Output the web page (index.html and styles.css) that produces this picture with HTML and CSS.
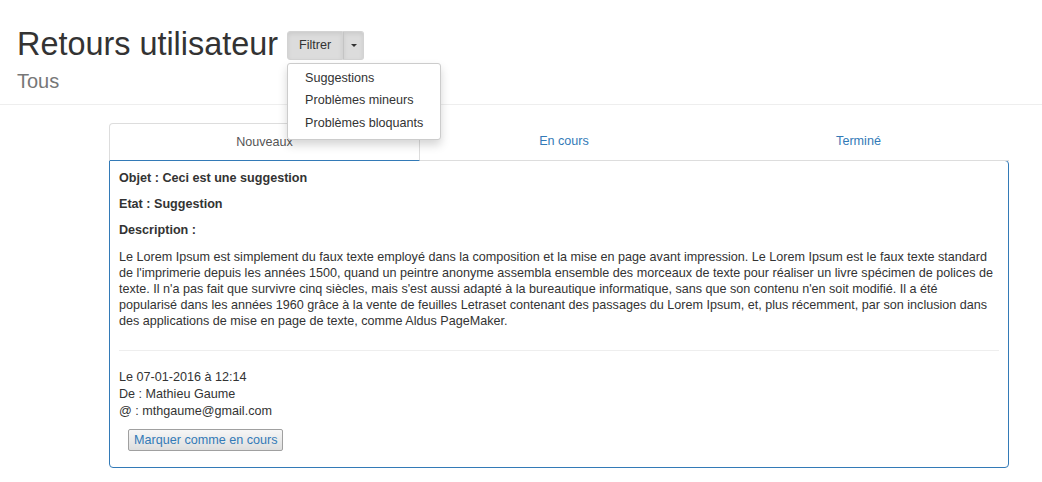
FILE: index.html
```html
<!DOCTYPE html>
<html lang="fr">
<head>
<meta charset="utf-8">
<title>Retours utilisateur</title>
<link rel="stylesheet" href="styles.css">
</head>
<body>
<header class="page-header">
  <div class="title-row">
    <h1 class="title">Retours utilisateur</h1>
    <div class="btn-group">
      <button class="btn btn-main">Filtrer</button>
      <button class="btn btn-caret"><span class="caret"></span></button>
      <ul class="dropdown">
        <li>Suggestions</li>
        <li>Problèmes mineurs</li>
        <li>Problèmes bloquants</li>
      </ul>
    </div>
  </div>
  <h3 class="subtitle">Tous</h3>
</header>

<section class="feedback">
  <nav class="tabs">
    <div class="tab active">Nouveaux</div>
    <div class="tab">En cours</div>
    <div class="tab">Terminé</div>
  </nav>
  <div class="panel">
    <p class="field">Objet : Ceci est une suggestion</p>
    <p class="field">Etat : Suggestion</p>
    <p class="field">Description :</p>
    <p class="desc">Le Lorem Ipsum est simplement du faux texte employé dans la composition et la mise en page avant impression. Le Lorem Ipsum est le faux texte standard de l'imprimerie depuis les années 1500, quand un peintre anonyme assembla ensemble des morceaux de texte pour réaliser un livre spécimen de polices de texte. Il n'a pas fait que survivre cinq siècles, mais s'est aussi adapté à la bureautique informatique, sans que son contenu n'en soit modifié. Il a été popularisé dans les années 1960 grâce à la vente de feuilles Letraset contenant des passages du Lorem Ipsum, et, plus récemment, par son inclusion dans des applications de mise en page de texte, comme Aldus PageMaker.</p>
    <hr class="sep">
    <div class="meta">
      <div>Le 07-01-2016 à 12:14</div>
      <div>De : Mathieu Gaume</div>
      <div>@ : mthgaume@gmail.com</div>
    </div>
    <button class="mark">Marquer comme en cours</button>
  </div>
</section>
</body>
</html>
```

FILE: styles.css
```css
* { box-sizing: border-box; }
html, body { margin: 0; padding: 0; background: #fff; }
body {
  font-family: "Liberation Sans", Arial, sans-serif;
  color: #333;
  font-size: 12.6px;
  width: 1042px;
}
.page-header {
  padding: 26px 0 0 17px;
  border-bottom: 1px solid #eee;
  height: 105px;
}
.title-row {
  display: flex;
  align-items: center;
  gap: 9px;
}
.title {
  margin: 0;
  font-size: 32.4px;
  font-weight: normal;
  line-height: 36px;
  color: #333;
}
.btn-group {
  position: relative;
  display: flex;
  margin-top: 2px;
}
.btn {
  font-family: inherit;
  font-size: 12.6px;
  color: #333;
  background: #dcdcdc;
  border: 1px solid #d3d3d3;
  height: 29px;
  margin: 0;
  box-shadow: inset 0 2px 4px rgba(0,0,0,0.08);
}
.btn-main {
  width: 56px;
  border-radius: 3px 0 0 3px;
  padding: 0;
}
.btn-caret {
  width: 21px;
  border-left: 1px solid #c4c4c4;
  border-radius: 0 3px 3px 0;
  padding: 0;
  display: flex;
  align-items: center;
  justify-content: center;
}
.caret {
  width: 0; height: 0;
  border-left: 3px solid transparent;
  border-right: 3px solid transparent;
  border-top: 3px solid #333;
}
.dropdown {
  position: absolute;
  left: 0;
  top: 32px;
  width: 154px;
  margin: 0;
  padding: 3px 0 5px;
  list-style: none;
  background: #fff;
  border: 1px solid #ccc;
  border-radius: 3px;
  box-shadow: 0 5px 10px rgba(0,0,0,0.17);
  z-index: 10;
}
.dropdown li {
  padding: 3px 17px;
  line-height: 16.5px;
  color: #333;
  white-space: nowrap;
}
.subtitle {
  margin: 7px 0 0;
  font-size: 20px;
  font-weight: normal;
  line-height: 24px;
  color: #777;
}
.feedback {
  margin: 18px 33px 0 109px;
  width: 900px;
}
.tabs {
  display: grid;
  grid-template-columns: 311px 288px 301px;
  height: 37px;
}
.tab {
  text-align: center;
  line-height: 17px;
  padding: 10px 0 9px;
  color: #337ab7;
  border-bottom: 1px solid #ddd;
}
.tab.active {
  color: #555;
  border: 1px solid #ddd;
  border-bottom: 1px solid transparent;
  border-radius: 4px 4px 0 0;
}
.panel {
  border: 1px solid #337ab7;
  border-radius: 0 4px 4px 4px;
  padding: 9px 9px 16px;
}
.field {
  margin: 0 0 10px;
  font-weight: bold;
  line-height: 16px;
}
.desc {
  margin: 11px 0 0;
  line-height: 16px;
}
.sep {
  border: 0;
  border-top: 1px solid #eee;
  margin: 21px 0 18px;
}
.meta {
  line-height: 17px;
}
.mark {
  margin: 9px 0 0 9px;
  font-family: inherit;
  font-size: 12.6px;
  color: #337ab7;
  background: linear-gradient(#f6f6f6, #dedede);
  border: 1px solid #a0a0a0;
  border-radius: 2px;
  height: 22px;
  padding: 0 5px;
}
```
